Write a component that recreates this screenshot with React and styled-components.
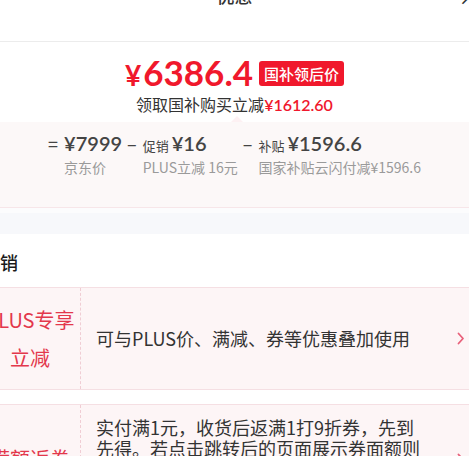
import React from 'react';
import styled, { createGlobalStyle } from 'styled-components';

const GlobalStyle = createGlobalStyle`
  body {
    margin: 0;
    background: #fff;
    font-family: "Noto Sans CJK SC", "Noto Sans", sans-serif;
    overflow: hidden;
  }
`;

const Page = styled.div`
  width: 469px;
  height: 456px;
  overflow: hidden;
  background: #fff;
`;

const Header = styled.div`
  position: relative;
  height: 41px;
  display: flex;
  justify-content: center;
  border-bottom: 1px solid #ececec;
`;

const Title = styled.div`
  margin-top: -14px;
  font-size: 18px;
  line-height: 18px;
  font-weight: 500;
  color: #333;
`;

const Close = styled.div`
  position: absolute;
  right: -11px;
  top: -15px;
  font-size: 22px;
  line-height: 20px;
  color: #333;
`;

const PriceRow = styled.div`
  display: flex;
  align-items: center;
  justify-content: center;
  gap: 6px;
  margin-top: 10px;
`;

const BigPrice = styled.div`
  color: #f0182c;
  font-family: "Lato", "Noto Sans", sans-serif;
  font-weight: 700;
  font-size: 35px;
  line-height: 40px;
  span {
    font-size: 28px;
    margin-right: 2px;
  }
`;

const Badge = styled.div`
  background: #f0182c;
  color: #fff;
  font-size: 15px;
  line-height: 25px;
  padding: 0 5px;
  border-radius: 3px;
  font-weight: 500;
`;

const Sub = styled.div`
  text-align: center;
  font-size: 16px;
  line-height: 22px;
  margin-top: -2px;
  color: #333;
  em {
    font-style: normal;
    color: #f0182c;
    font-family: "Lato", "Noto Sans", sans-serif;
    font-weight: 600;
  }
`;

const Detail = styled.div`
  position: relative;
  margin-top: 6px;
  height: 86px;
  background: #fcf8f8;
  border-bottom: 1px solid #f7e6e9;
  display: flex;
  justify-content: center;
  gap: 5px;
  padding: 7px 0 0 0;
  box-sizing: border-box;
  &::before {
    content: '';
    position: absolute;
    left: 231px;
    top: -6px;
    border-left: 6px solid transparent;
    border-right: 6px solid transparent;
    border-bottom: 6px solid #fdf1f3;
  }
`;

const Col = styled.div`
  display: flex;
  gap: 6px;
`;

const Op = styled.div`
  font-size: 18px;
  line-height: 28px;
  color: #444;
`;

const Stack = styled.div`
  display: flex;
  flex-direction: column;
`;

const Value = styled.div`
  display: flex;
  align-items: baseline;
  gap: 3px;
  height: 28px;
  line-height: 28px;
  color: #444;
  font-size: 20px;
  font-weight: 600;
  font-family: "Lato", "Noto Sans", sans-serif;
  small {
    font-size: 13px;
    font-weight: 400;
    font-family: "Noto Sans CJK SC", sans-serif;
  }
`;

const Label = styled.div`
  font-size: 14px;
  line-height: 20px;
  color: #9a9a9a;
  white-space: nowrap;
`;

const Band = styled.div`
  height: 21px;
  background: #f7f8fb;
  border-top: 5px solid #fcfcfd;
`;

const SectionTitle = styled.div`
  margin-left: -18px;
  padding: 19px 0 16px;
  font-size: 18px;
  line-height: 18px;
  font-weight: 500;
  color: #1a1a1a;
`;

const Card = styled.div`
  display: grid;
  grid-template-columns: 101px 1fr 12px;
  margin-left: -20px;
  width: 489px;
  min-height: ${(p) => p.h}px;
  background: #fdf5f6;
  border-top: 1px solid #f5dfe3;
  border-bottom: 1px solid #f5dfe3;
  margin-bottom: 14px;
`;

const CardLabel = styled.div`
  display: flex;
  align-items: center;
  justify-content: center;
  text-align: center;
  border-right: 1px dashed #f0cdd4;
  color: #e3384c;
  font-size: 20px;
  line-height: 38px;
`;

const CardText = styled.div`
  display: flex;
  align-items: center;
  padding: 11px 30px 11px 15px;
  font-size: 18px;
  line-height: 21px;
  color: #333;
`;

const Arrow = styled.div`
  display: flex;
  align-items: center;
`;

const Chevron = () => (
  <svg width="8" height="13" viewBox="0 0 8 13">
    <path d="M1.5 1.5 L6 6.5 L1.5 11.5" fill="none" stroke="#e8607a" strokeWidth="1.8" strokeLinecap="round" strokeLinejoin="round" />
  </svg>
);

const parts = [
  { op: '=', value: '¥7999', label: '京东价' },
  { op: '–', tag: '促销', value: '¥16', label: 'PLUS立减 16元' },
  { op: '–', tag: '补贴', value: '¥1596.6', label: '国家补贴云闪付减¥1596.6' },
];

export default function App() {
  return (
    <Page>
      <GlobalStyle />
      <Header>
        <Title>优惠</Title>
        <Close>×</Close>
      </Header>
      <PriceRow>
        <BigPrice><span>¥</span>6386.4</BigPrice>
        <Badge>国补领后价</Badge>
      </PriceRow>
      <Sub>领取国补购买立减<em>¥1612.60</em></Sub>
      <Detail>
        {parts.map((p) => (
          <Col key={p.label}>
            <Op>{p.op}</Op>
            <Stack>
              <Value>
                {p.tag && <small>{p.tag}</small>}
                {p.value}
              </Value>
              <Label>{p.label}</Label>
            </Stack>
          </Col>
        ))}
      </Detail>
      <Band />
      <SectionTitle>促销</SectionTitle>
      <Card h={101}>
        <CardLabel>PLUS专享<br />立减</CardLabel>
        <CardText>可与PLUS价、满减、券等优惠叠加使用</CardText>
        <Arrow><Chevron /></Arrow>
      </Card>
      <Card h={108}>
        <CardLabel>满额返券</CardLabel>
        <CardText>实付满1元，收货后返满1打9折券，先到先得。若点击跳转后的页面展示券面额则以页面展示为准，不一致时以实际发放为准。</CardText>
        <Arrow><Chevron /></Arrow>
      </Card>
    </Page>
  );
}
